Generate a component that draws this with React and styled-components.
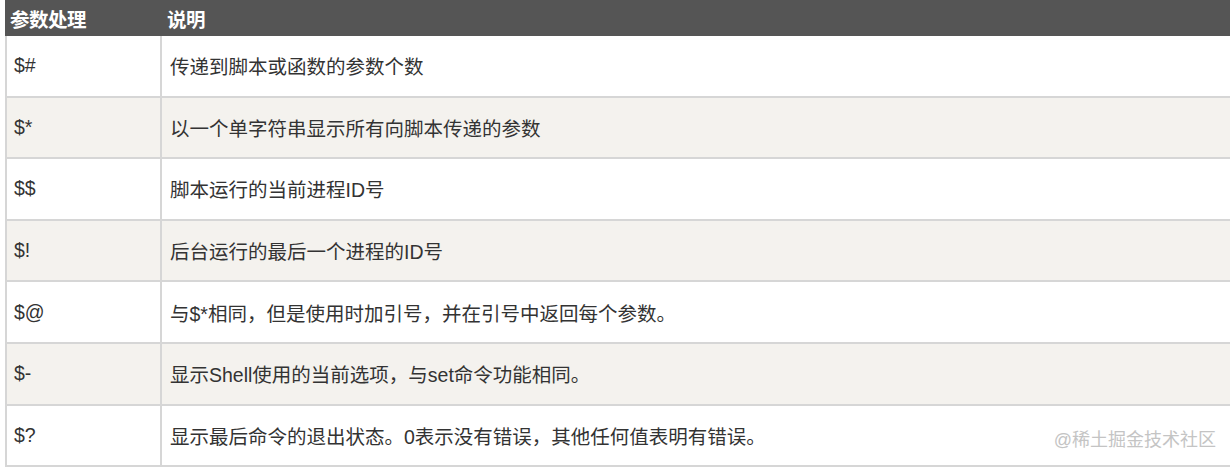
import React from "react";
import styled, { createGlobalStyle } from "styled-components";

const rows = [
  { key: "$#", desc: "传递到脚本或函数的参数个数" },
  { key: "$*", desc: "以一个单字符串显示所有向脚本传递的参数" },
  { key: "$$", desc: "脚本运行的当前进程ID号" },
  { key: "$!", desc: "后台运行的最后一个进程的ID号" },
  { key: "$@", desc: "与$*相同，但是使用时加引号，并在引号中返回每个参数。" },
  { key: "$-", desc: "显示Shell使用的当前选项，与set命令功能相同。" },
  { key: "$?", desc: "显示最后命令的退出状态。0表示没有错误，其他任何值表明有错误。" },
];

export default function App() {
  return (
    <>
      <GlobalStyle />
      <Page>
        <Table>
          <HeaderRow>
            <HeaderCell>参数处理</HeaderCell>
            <HeaderCell>说明</HeaderCell>
          </HeaderRow>
          {rows.map((row, i) => (
            <BodyRow key={row.key} $striped={i % 2 === 1}>
              <KeyCell>{row.key}</KeyCell>
              <DescCell>{row.desc}</DescCell>
            </BodyRow>
          ))}
        </Table>
        <Watermark>@稀土掘金技术社区</Watermark>
      </Page>
    </>
  );
}

const GlobalStyle = createGlobalStyle`
  html, body {
    margin: 0;
    padding: 0;
    background: #ffffff;
  }
  body {
    font-family: "Liberation Sans", "Noto Sans CJK SC", sans-serif;
  }
`;

const Page = styled.div`
  position: relative;
  width: 1230px;
  height: 472px;
  padding-left: 5px;
  box-sizing: border-box;
  overflow: hidden;
`;

const Table = styled.div`
  display: flex;
  flex-direction: column;
  width: 1225px;
`;

const HeaderRow = styled.div`
  display: grid;
  grid-template-columns: 157px 1fr;
  height: 36px;
  background-color: #555555;
`;

const HeaderCell = styled.div`
  display: flex;
  align-items: center;
  padding-left: 5px;
  color: #ffffff;
  font-size: 19.5px;
  font-weight: 700;
  letter-spacing: -0.5px;
`;

const BodyRow = styled.div`
  display: grid;
  grid-template-columns: 157px 1fr;
  height: 61.6px;
  box-sizing: border-box;
  border-bottom: 2px solid #d6d6d6;
  background-color: ${(p) => (p.$striped ? "#f4f2ee" : "#ffffff")};
`;

const KeyCell = styled.div`
  display: flex;
  align-items: center;
  border-left: 2px solid #d6d6d6;
  border-right: 2px solid #d6d6d6;
  padding-left: 7px;
  color: #333333;
  font-size: 19.5px;
`;

const DescCell = styled.div`
  display: flex;
  align-items: center;
  padding-left: 8px;
  color: #333333;
  font-size: 19.5px;
`;

const Watermark = styled.div`
  position: absolute;
  right: 14px;
  top: 425px;
  color: #c4c4c4;
  font-size: 18px;
  white-space: nowrap;
`;
